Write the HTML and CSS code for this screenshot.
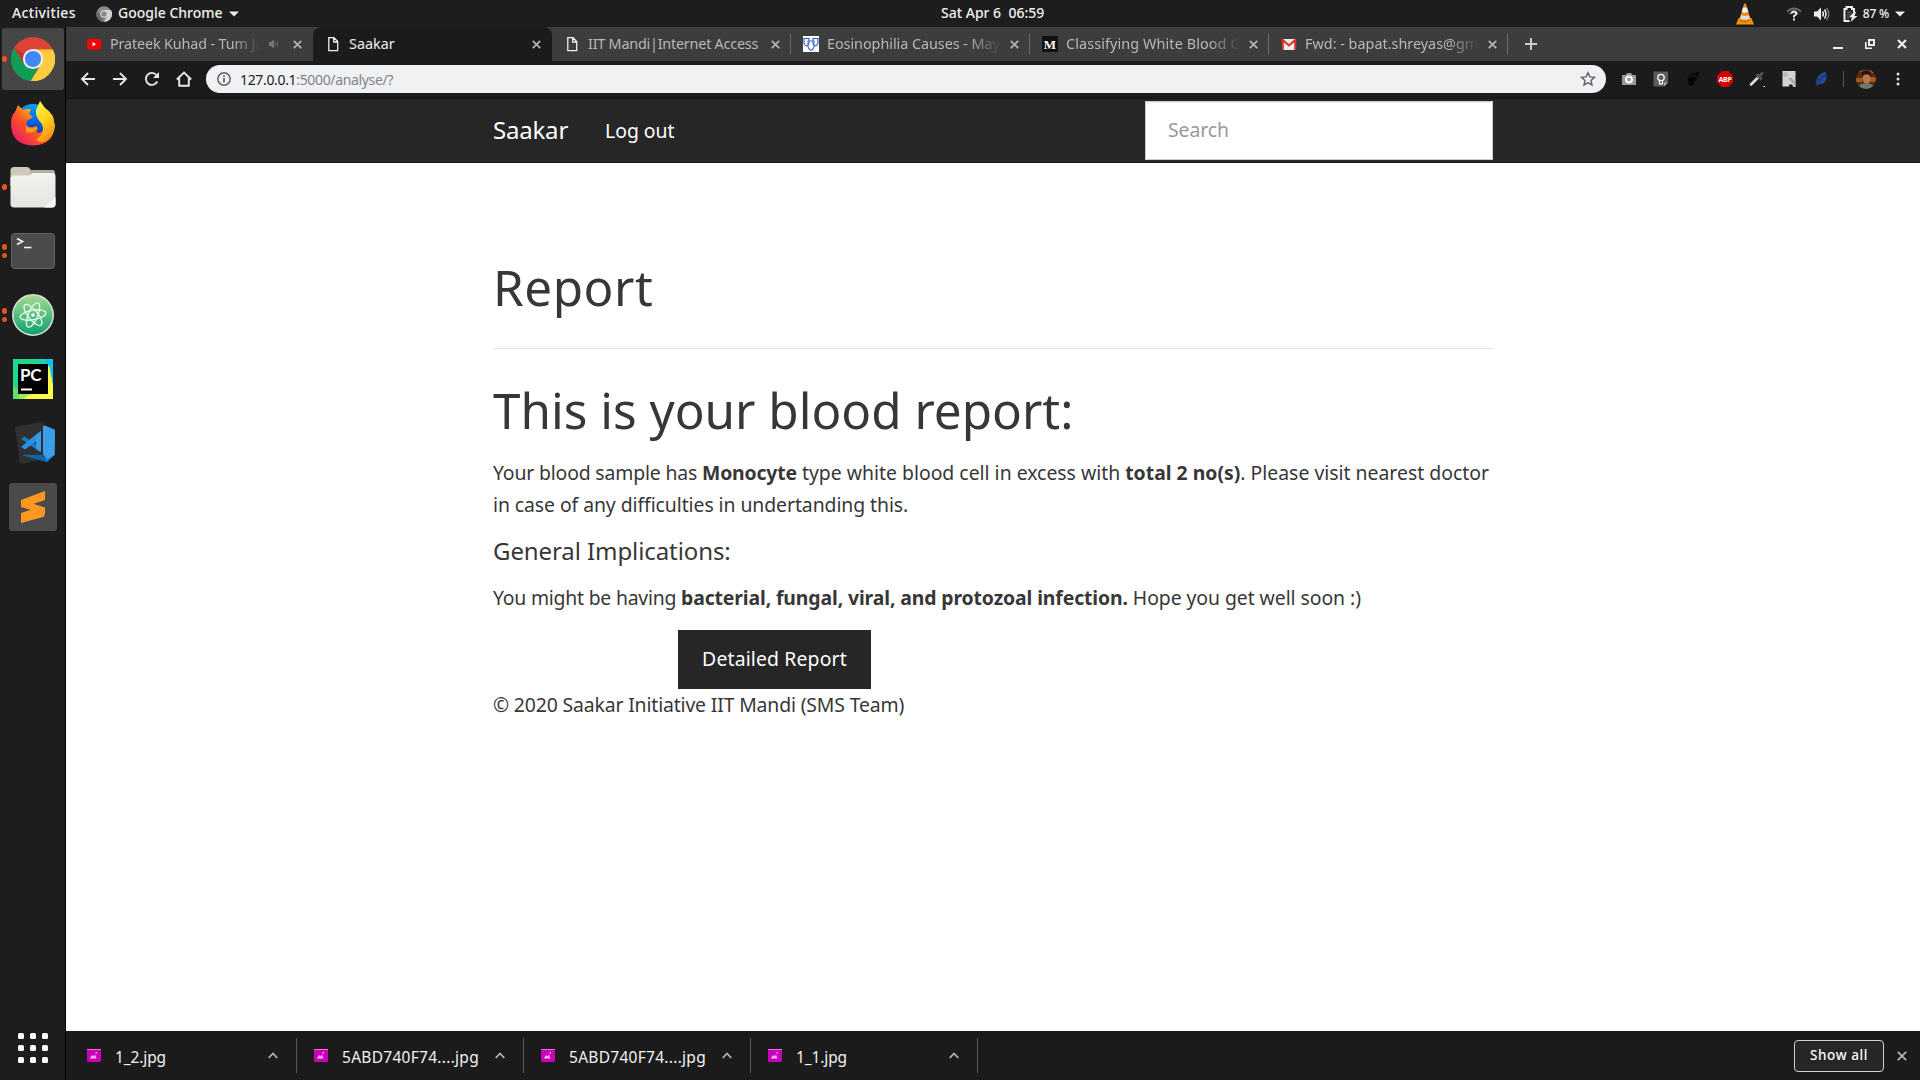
FILE: index.html
```html
<!DOCTYPE html>
<html lang="en">
<head>
<meta charset="utf-8">
<title>Saakar</title>
<link rel="stylesheet" href="styles.css">
</head>
<body>
<header class="topbar">
  <span class="activities">Activities</span>
  <svg class="app-icon" width="16" height="16" viewBox="0 0 48 48"><circle cx="24" cy="24" r="23" fill="#8b8b8b"/><path d="M24 12H45A23 23 0 0 1 24 47L34 30Z" fill="#d2d2d2"/><path d="M4 13L14 30 24 36 20 47A23 23 0 0 1 4 13Z" fill="#6c6c6c"/><circle cx="24" cy="24" r="11" fill="#ddd"/><circle cx="24" cy="24" r="8" fill="#8a8a8a"/></svg>
  <span class="app-name">Google Chrome</span>
  <svg class="caret" width="10" height="6" viewBox="0 0 10 6"><path d="M0 .5H10L5 5.500Z" fill="#eee"/></svg>
  <span class="clock">Sat Apr 6&nbsp; 06:59</span>
  <div class="tray">
    <svg class="vlc" width="18" height="22" viewBox="0 0 18 22"><path d="M2.500 15H15.500L18 21.500H0Z" fill="#f39200"/><path d="M3.500 17.500Q9 21 14.500 17.500L13 13H5Z" fill="#c86800"/><path d="M8 1Q9 -.3 10 1L14.500 16.500Q9 19.500 3.500 16.500Z" fill="#f08a1d"/><path d="M7 4.500H11L12.300 9Q9 10.500 5.700 9Z" fill="#eee"/><path d="M5 12Q9 14 13 12L14 15.500Q9 18 4 15.500Z" fill="#ddd"/></svg>
    <svg class="wifi" width="16" height="14" viewBox="0 0 16 14"><path d="M1 4.500Q8 -1.500 15 4.500M3.500 7.200Q8 3 12.500 7.200" fill="none" stroke="#6b6b6b" stroke-width="1.700"/><path d="M5.700 6.500Q5.800 4.500 8 4.500T10.300 6.400Q10.300 7.800 8 9V10.500" fill="none" stroke="#eee" stroke-width="1.900"/><rect x="7" y="11.500" width="2" height="2" fill="#eee"/></svg>
    <svg class="volume" width="16" height="14" viewBox="0 0 16 14"><path d="M0 4.500H3L7 .5V13.500L3 9.500H0Z" fill="#eee"/><path d="M8.500 4.500Q10.300 7 8.500 9.500M10.500 2.500Q13.500 7 10.500 11.500" fill="none" stroke="#eee" stroke-width="1.500"/><path d="M12.500 .8Q17 7 12.500 13.200" fill="none" stroke="#777" stroke-width="1.400"/></svg>
    <svg class="battery" width="15" height="16" viewBox="0 0 15 16"><path d="M6.500 15H1.500V3H3.500V1H9V3H11V6.500" fill="none" stroke="#eee" stroke-width="2"/><path d="M4 5H9V7L6 10.500V13H4Z" fill="#eee" opacity=".2"/><path d="M11 6L6 11.200H9L7.500 16 14.500 10H11.500L13 6Z" fill="#eee"/></svg>
    <span class="percent">87 %</span>
    <svg class="caret" width="10" height="6" viewBox="0 0 10 6"><path d="M0 .5H10L5 5.500Z" fill="#eee"/></svg>
  </div>
</header>
<div class="desktop">
  <nav class="dock">
    <div class="dock-item current"><i class="dots"><b></b></i>
      <svg width="44" height="44" viewBox="0 0 48 48"><circle cx="24" cy="24" r="24" fill="#db4437"/><path d="M3.300 12A24 24 0 0 0 22 48L32 29 24 24 14 29.500Z" fill="#0f9d58"/><path d="M24 13.500H45.600A24 24 0 0 1 21.500 48L33 29.500Z" fill="#ffcd40"/><path d="M24 13.500H45.500L44 17 30 15.500Z" fill="#f2b332" opacity=".5"/><path d="M3.500 12L14 29 16 19Z" fill="#a52714" opacity=".45"/><circle cx="24" cy="24" r="11" fill="#f1f1f1"/><circle cx="24" cy="24" r="8.800" fill="#4285f4"/></svg></div>
    <div class="dock-item">
      <svg width="44" height="46" viewBox="0 0 44 46"><defs><linearGradient id="fx" x1="1" y1="0" x2="0" y2=".9"><stop offset="0" stop-color="#fff44f"/><stop offset=".35" stop-color="#ffb41f"/><stop offset=".6" stop-color="#ff5522"/><stop offset="1" stop-color="#e3127d"/></linearGradient><linearGradient id="fy" x1=".2" y1="0" x2=".6" y2="1"><stop offset="0" stop-color="#fff44f"/><stop offset=".5" stop-color="#ffd21c"/><stop offset="1" stop-color="#ff8a16"/></linearGradient><linearGradient id="fb" x1=".6" y1="0" x2=".4" y2="1"><stop offset="0" stop-color="#00a4ff"/><stop offset=".5" stop-color="#0060df"/><stop offset="1" stop-color="#2b1a7c"/></linearGradient></defs><circle cx="22" cy="22" r="18" fill="url(#fb)"/><path d="M7 5L12 10Q16 8 20 9L18 14 22 17 16 21 15 25Q19 29 25 26L27 28Q23 35 31 32 36 28 33 18L44 24Q43 45 22 45.500 1 45 0 25 0 15 4 12Z" fill="url(#fx)"/><path d="M29 1L34 8Q44 14 43.500 26 42 36 36 40 31 44 25 40 35 33 31 24 24 17 25 10Z" fill="url(#fy)"/><path d="M15 25Q18 30 25 27L26 29Q22 34 15 32Z" fill="#ff9a1f"/></svg></div>
    <div class="dock-item"><i class="dots"><b></b></i>
      <svg width="46" height="42" viewBox="0 0 46 42"><defs><linearGradient id="fo" x2="0" y2="1"><stop offset="0" stop-color="#f4f2ee"/><stop offset="1" stop-color="#e6e4df"/></linearGradient></defs><path d="M.5 5Q.5 1 4 1H17Q19 1 20 3L21 4H42Q45 4 45 8V20H.5Z" fill="#cfc9bb"/><path d="M20 4H42Q45 4 45 8V12H20Z" fill="#b5ae9e"/><path d="M.5 12Q1 9.500 4 9.500H18Q20 9.500 21 8L22 7H42Q45.500 7 45.500 10V38Q45.500 41.500 42 41.500H4Q.5 41.500 .5 38Z" fill="url(#fo)"/><path d="M34 41.500L45.500 31V38Q45.500 41.500 42 41.500Z" fill="#f8f7f5"/></svg></div>
    <div class="dock-item"><i class="dots"><b></b><b></b></i>
      <svg width="44" height="36" viewBox="0 0 44 36"><rect x=".5" y=".5" width="43" height="35" rx="3.500" fill="#4b4b4b" stroke="#656565"/><path d="M6 5.500L11.500 8.500 6 11.500" fill="none" stroke="#f3f3f3" stroke-width="1.700"/><path d="M13 14.500H20.500" stroke="#f3f3f3" stroke-width="1.600"/></svg></div>
    <div class="dock-item"><i class="dots"><b></b><b></b></i>
      <svg width="42" height="42" viewBox="0 0 42 42"><defs><linearGradient id="at" x2="0" y2="1"><stop offset="0" stop-color="#a5dd90"/><stop offset="1" stop-color="#0ba06e"/></linearGradient></defs><circle cx="21" cy="21" r="20.200" fill="url(#at)" stroke="#dedede" stroke-width="1.500"/><g fill="none" stroke="#eef8ee" stroke-width="1.300"><ellipse cx="21" cy="21" rx="13" ry="4.800" transform="rotate(-10 21 21)"/><ellipse cx="21" cy="21" rx="13" ry="4.800" transform="rotate(51 21 21)"/><ellipse cx="21" cy="21" rx="13" ry="4.800" transform="rotate(112 21 21)"/></g><circle cx="21" cy="21" r="1.800" fill="#fff"/></svg></div>
    <div class="dock-item">
      <svg width="40" height="40" viewBox="0 0 40 40"><rect width="40" height="40" fill="#21d789"/><path d="M30 0H40V26L33 8Z" fill="#07c3f2"/><path d="M22 0L32 0 36 14Z" fill="#22d0b0"/><path d="M36 6L40 26V40H10L22 30Z" fill="#fcf84a"/><path d="M0 27L12 36 9 40H0Z" fill="#5fe06d"/><path d="M6 34L22 32 10 40H6Z" fill="#9fe85a"/><rect x="5" y="5" width="30" height="30" fill="#000"/><rect x="8" y="29.500" width="11" height="2" fill="#fff"/><text class="pc-mark" x="7" y="21.500">PC</text></svg></div>
    <div class="dock-item">
      <svg class="vscode" width="42" height="44" viewBox="0 0 42 44"><path d="M1 6L29 1 37 37 6 43Z" fill="#303030"/><path d="M8 34L31 37V5L41 9 40.500 34 33 41Z" fill="#1b80cc"/><path d="M29 33V5L31 4.500 41 9 40.500 34 33 38Z" fill="#3a9fe8"/><path d="M8 34L29 33 33 41Z" fill="#0e66aa"/><path d="M1 6L29 1V34L8 33.500Z" fill="#303030"/><path d="M7 18L10.500 15.500 26 26V31Z" fill="#1d79bd"/><path d="M20 15L27 10V17L11 28.500 7 26Z" fill="#2c8fdc"/><path d="M22 14L27 10V31L22 28Z" fill="#379be5"/></svg></div>
    <div class="dock-item">
      <svg width="48" height="48" viewBox="0 0 48 48"><rect width="48" height="48" rx="3" fill="#4a4a4a"/><path d="M12 17L36 8V17L24 21 36 25Q36 34 34 34L12 40V30L24 26 12 23Z" fill="#ff9821"/><path d="M12 23L24 21.500 36 25 30 29Z" fill="#d97a10"/><path d="M12 17L36 24.500V31L12 24Z" fill="#ff9821"/></svg></div>
    <svg class="apps" width="30" height="30" viewBox="0 0 30 30" fill="#fafafa"><rect width="6" height="6" rx="1.500"/><rect x="12" width="6" height="6" rx="1.500"/><rect x="24" width="6" height="6" rx="1.500"/><rect y="12" width="6" height="6" rx="1.500"/><rect x="12" y="12" width="6" height="6" rx="1.500"/><rect x="24" y="12" width="6" height="6" rx="1.500"/><rect y="24" width="6" height="6" rx="1.500"/><rect x="12" y="24" width="6" height="6" rx="1.500"/><rect x="24" y="24" width="6" height="6" rx="1.500"/></svg>
  </nav>
  <div class="browser">
    <div class="tabs">
      <div class="tab first"><svg class="fav" width="16" height="16" viewBox="0 0 16 16"><rect x="1" y="3" width="14" height="10.500" rx="2.500" fill="#f00"/><path d="M6.500 6L10 8.200 6.500 10.400Z" fill="#fff"/></svg><span class="tab-title fade"><span class="t-youtube">Prateek Kuhad - Tum Ja</span></span><svg class="audio" width="11" height="10" viewBox="0 0 11 10"><path d="M0 3H2L5 .5V9.500L2 7H0Z" fill="#777"/><path d="M6.500 3V7M8.500 2V8" stroke="#666"/></svg><svg class="x" width="9" height="9" viewBox="0 0 9 9"><path d="M.8 .8L8.200 8.200M8.200 .8L.8 8.200"/></svg></div>
      <div class="tab active"><svg class="fav" width="16" height="16" viewBox="0 0 16 16"><path d="M3.800 1.700H9L12.700 5.500V14.700H3.800ZM8.700 2V6H12.700" fill="none" stroke="#eee" stroke-width="1.300"/></svg><span class="tab-title"><span>Saakar</span></span><svg class="x" width="9" height="9" viewBox="0 0 9 9"><path d="M.8 .8L8.200 8.200M8.200 .8L.8 8.200"/></svg></div>
      <div class="tab"><svg class="fav" width="16" height="16" viewBox="0 0 16 16"><path d="M3.800 1.700H9L12.700 5.500V14.700H3.800ZM8.700 2V6H12.700" fill="none" stroke="#eee" stroke-width="1.300"/></svg><span class="tab-title"><span class="t-iit">IIT Mandi|Internet Access</span></span><svg class="x" width="9" height="9" viewBox="0 0 9 9"><path d="M.8 .8L8.200 8.200M8.200 .8L.8 8.200"/></svg></div>
      <div class="tab ruled"><svg class="fav" width="16" height="16" viewBox="0 0 16 16"><rect width="16" height="16" fill="#fff"/><g fill="none" stroke="#2a55c0" stroke-width="1.100"><path d="M1 2.500H6V7Q6 9 3.500 10 1 9 1 7ZM10 2.500H15V7Q15 9 12.500 10 10 9 10 7Z"/><path d="M5 5H11V10Q11 13 8 14.500 5 13 5 10Z" stroke="#4a70cc"/></g></svg><span class="tab-title fade"><span class="t-mayo">Eosinophilia Causes - May</span></span><svg class="x" width="9" height="9" viewBox="0 0 9 9"><path d="M.8 .8L8.200 8.200M8.200 .8L.8 8.200"/></svg></div>
      <div class="tab ruled"><svg class="fav" width="16" height="16" viewBox="0 0 16 16"><rect width="16" height="16" fill="#111"/><text class="m-mark" x="8" y="12.500">M</text></svg><span class="tab-title fade"><span class="t-medium">Classifying White Blood C</span></span><svg class="x" width="9" height="9" viewBox="0 0 9 9"><path d="M.8 .8L8.200 8.200M8.200 .8L.8 8.200"/></svg></div>
      <div class="tab ruled"><svg class="fav" width="16" height="16" viewBox="0 0 16 16"><rect x="1" y="3" width="14" height="11" rx="1" fill="#eee"/><path d="M1.800 14V4L8 9.500 14.200 4V14" fill="none" stroke="#d93025" stroke-width="2"/></svg><span class="tab-title fade"><span>Fwd: - bapat.shreyas@gm</span></span><svg class="x" width="9" height="9" viewBox="0 0 9 9"><path d="M.8 .8L8.200 8.200M8.200 .8L.8 8.200"/></svg></div>
      <div class="tab-end"></div>
      <div class="newtab"><svg width="12" height="12" viewBox="0 0 12 12"><path d="M6 0V12M0 6H12" stroke="#ccc" stroke-width="2"/></svg></div>
      <div class="winctl"><svg width="10" height="10" viewBox="0 0 10 10"><path d="M0 9H10" stroke="#eee" stroke-width="2"/></svg><svg width="10" height="10" viewBox="0 0 10 10"><path d="M4 1H9V6H4Z" fill="none" stroke="#eee" stroke-width="2"/><path d="M.8 3V9.200H7" fill="none" stroke="#eee" stroke-width="1.600"/></svg><svg width="10" height="10" viewBox="0 0 10 10"><path d="M1 1L9 9M9 1L1 9" stroke="#eee" stroke-width="2.200"/></svg></div>
    </div>
    <div class="toolbar">
      <div class="nav-icons">
        <svg width="16" height="16" viewBox="0 0 16 16"><path d="M15 8H2.500M8 2L2 8 8 14"/></svg>
        <svg width="16" height="16" viewBox="0 0 16 16"><path d="M1 8H13.500M8 2L14 8 8 14"/></svg>
        <svg width="16" height="16" viewBox="0 0 16 16"><path d="M13.300 10.500A6 6 0 1 1 12.500 4L14 5.500"/><path d="M15 1V7H9Z" class="solid"/></svg>
        <svg width="16" height="16" viewBox="0 0 16 16"><path d="M.8 8.500L8 1.500 15.200 8.500M3.200 7V14.800H12.800V7"/></svg>
      </div>
      <div class="omnibox">
        <svg width="14" height="14" viewBox="0 0 14 14"><circle cx="7" cy="7" r="6.200" fill="none" stroke="#5f6368" stroke-width="1.500"/><path d="M7 6V10.500M7 3.300V4.900" stroke="#5f6368" stroke-width="1.700"/></svg>
        <span class="url"><span class="host">127.0.0.1</span>:5000/analyse/?</span>
        <svg class="star" width="16" height="16" viewBox="0 0 16 16"><path d="M8 1.700L9.900 5.900 14.500 6.400 11 9.400 12 14 8 11.600 4 14 5 9.400 1.500 6.400 6.100 5.900Z" fill="none" stroke="#5f6368" stroke-width="1.400"/></svg>
      </div>
      <div class="extensions">
        <svg width="16" height="16" viewBox="0 0 16 16"><path d="M1 4H4.500L6 2H10L11.500 4H15V14H1Z" fill="#999"/><circle cx="8" cy="8.500" r="3" fill="none" stroke="#fff" stroke-width="1.800"/></svg>
        <svg width="16" height="16" viewBox="0 0 16 16"><path d="M.5 .5H15V11L11 15.500H.5Z" fill="#5c5c5c"/><path d="M11 15.500V11.500H15Z" fill="#aaa"/><circle cx="8" cy="6.500" r="3.200" fill="none" stroke="#fff" stroke-width="1.300"/><path d="M6.500 9.500V12.800H9.500V9.500" fill="none" stroke="#fff" stroke-width="1.200"/></svg>
        <svg width="16" height="16" viewBox="0 0 16 16" fill="#050505"><path d="M3 8Q7 5 12 7 13 10 9 10 10 12 8 14.500 5 16 3 12Z"/><ellipse cx="12" cy="3" rx="1.800" ry="2.500"/><ellipse cx="8.300" cy="3.500" rx="1.200" ry="1.700"/><ellipse cx="5.500" cy="4.800" rx="1" ry="1.400"/><ellipse cx="3.200" cy="6.500" rx=".8" ry="1.200"/></svg>
        <svg width="16" height="16" viewBox="0 0 16 16"><path d="M4.700 0H11.300L16 4.700V11.300L11.300 16H4.700L0 11.300V4.700Z" fill="#d40000"/><text class="abp" x="8" y="10.700">ABP</text></svg>
        <svg width="16" height="16" viewBox="0 0 16 16"><path d="M2 13.500L9 6.500" stroke="#ddd" stroke-width="2.600" stroke-linecap="round"/><path d="M8.500 4L12 7.500M9.500 6L13 2.500" stroke="#555" stroke-width="2.800" stroke-linecap="round"/><rect x="14.500" y="15" width="1.500" height="1" fill="#fff"/></svg>
        <svg width="16" height="16" viewBox="0 0 16 16"><path d="M1.500 0H14.500V16H12.500L11 13.500H8V15.500H1.500Z" fill="#d4d4d4"/><circle cx="4.500" cy="3.500" r="2.500" fill="#bbb"/><path d="M7 7L10.500 7 14.500 11V15.500Z" fill="#aaa"/></svg>
        <svg width="16" height="16" viewBox="0 0 16 16"><path d="M13 .5Q5 2.500 3.500 9L2.500 15 7 13Q12 13 13.500 8Z" fill="#26479b"/><path d="M3 14L12 4M5 8L8 9M8 5L10 7" stroke="#15265c" stroke-width=".8"/></svg>
      </div>
      <i class="bar-rule"></i>
      <svg class="avatar" width="20" height="20" viewBox="0 0 20 20"><defs><clipPath id="av"><circle cx="10" cy="10" r="10"/></clipPath></defs><g clip-path="url(#av)"><rect width="20" height="20" fill="#5a2a12"/><path d="M0 9H6V13H0ZM14 8H20V13H14Z" fill="#a35a1c"/><path d="M3 3L6 1M14 1L17 4" stroke="#b0621f" stroke-width="1.500"/><ellipse cx="10.500" cy="9.500" rx="4" ry="5.300" fill="#b57454"/><path d="M6 8Q5 2 10.500 2T15 8L13 5.500H8Z" fill="#1d120e"/><path d="M2 20Q3 14.500 8 14.500H13Q18 15 18 20Z" fill="#6d7a70"/></g></svg>
      <svg class="menu" width="4" height="14" viewBox="0 0 4 14" fill="#ddd"><circle cx="2" cy="2" r="1.500"/><circle cx="2" cy="7" r="1.500"/><circle cx="2" cy="12" r="1.500"/></svg>
    </div>
    <div class="page">
      <nav class="navbar">
        <div class="container nav-row">
          <a class="brand">Saakar</a>
          <a class="logout">Log out</a>
          <div class="search">Search</div>
        </div>
      </nav>
      <main class="container">
        <h1 class="title">Report</h1>
        <hr>
        <h1>This is your blood report:</h1>
        <p><span class="snug">Your blood sample has </span><b class="snug">Monocyte</b><span> type white blood cell in excess with </span><b>total 2 no(s)</b><span>. Please visit nearest doctor</span><br><span class="line-two">in case of any difficulties in undertanding this.</span></p>
        <h4>General Implications:</h4>
        <p class="implications"><span class="lead">You might be having </span><b>bacterial, fungal, viral, and protozoal infection.</b><span class="wish"> Hope you get well soon :)</span></p>
        <a class="button">Detailed Report</a>
        <footer>© 2020 Saakar Initiative IIT Mandi (SMS Team)</footer>
      </main>
    </div>
    <div class="downloads">
      <div class="dl"><svg width="14" height="13" viewBox="0 0 14 13"><rect width="14" height="13" rx="1.500" fill="#c800b9"/><path d="M0 .5H14" stroke="#ee6be0"/><path d="M3 9L5 6 6.500 7.500 8 5.500 9.500 9.500H3ZM8.500 3H10V4.500H8.500Z" fill="#f5b5ee"/></svg><span class="short">1_2.jpg</span><svg class="up" width="10" height="7" viewBox="0 0 10 7"><path d="M.7 6L5 1.500 9.300 6"/></svg></div>
      <div class="dl"><svg width="14" height="13" viewBox="0 0 14 13"><rect width="14" height="13" rx="1.500" fill="#c800b9"/><path d="M0 .5H14" stroke="#ee6be0"/><path d="M3 9L5 6 6.500 7.500 8 5.500 9.500 9.500H3ZM8.500 3H10V4.500H8.500Z" fill="#f5b5ee"/></svg><span class="long">5ABD740F74....jpg</span><svg class="up" width="10" height="7" viewBox="0 0 10 7"><path d="M.7 6L5 1.500 9.300 6"/></svg></div>
      <div class="dl"><svg width="14" height="13" viewBox="0 0 14 13"><rect width="14" height="13" rx="1.500" fill="#c800b9"/><path d="M0 .5H14" stroke="#ee6be0"/><path d="M3 9L5 6 6.500 7.500 8 5.500 9.500 9.500H3ZM8.500 3H10V4.500H8.500Z" fill="#f5b5ee"/></svg><span class="long">5ABD740F74....jpg</span><svg class="up" width="10" height="7" viewBox="0 0 10 7"><path d="M.7 6L5 1.500 9.300 6"/></svg></div>
      <div class="dl"><svg width="14" height="13" viewBox="0 0 14 13"><rect width="14" height="13" rx="1.500" fill="#c800b9"/><path d="M0 .5H14" stroke="#ee6be0"/><path d="M3 9L5 6 6.500 7.500 8 5.500 9.500 9.500H3ZM8.500 3H10V4.500H8.500Z" fill="#f5b5ee"/></svg><span class="short">1_1.jpg</span><svg class="up" width="10" height="7" viewBox="0 0 10 7"><path d="M.7 6L5 1.500 9.300 6"/></svg></div>
      <button class="show-all">Show all</button>
      <svg class="x dl-close" width="10" height="10" viewBox="0 0 10 10"><path d="M.8 .8L9.200 9.200M9.200 .8L.8 9.200"/></svg>
    </div>
  </div>
</div>
</body>
</html>
```
FILE: styles.css
```css
* { box-sizing: border-box; }
body {
  margin: 0;
  width: 1920px;
  height: 1080px;
  overflow: hidden;
  display: flex;
  flex-direction: column;
  background: #1d1d1d;
  font-family: "Noto Sans", "Open Sans", sans-serif;
  font-size: 14px;
  color: #f2f2f2;
}
svg { display: block; flex: none; }
span, b, a { white-space: pre; }

/* desktop top bar */
.topbar {
  height: 27px;
  flex: none;
  display: grid;
  grid-template-columns: 84px 22px 111px 712px auto 1fr;
  align-items: center;
  padding-left: 12px;
  font-weight: 500;
}
.activities, .app-name, .clock { line-height: 19px; padding-bottom: 2px; }
.activities { letter-spacing: .35px; }
.tray {
  display: flex;
  align-items: center;
  justify-content: flex-end;
  padding-right: 15px;
}
.wifi { margin-left: 32px; }
.volume { margin-left: 12px; }
.battery { margin-left: 13px; }
.percent { margin: 0 6px 0 5px; font-size: 12px; letter-spacing: -.2px; }

.desktop { flex: 1; display: flex; min-height: 0; }

/* launcher */
.dock {
  width: 66px;
  border-right: 1px solid #000;
  display: flex;
  flex-direction: column;
  align-items: center;
  padding-bottom: 17px;
}
.dock-item {
  width: 62px;
  height: 62px;
  margin: 1px 0;
  display: flex;
  align-items: center;
  justify-content: center;
  position: relative;
  flex: none;
}
.dock-item.current { background: #464646; border-radius: 3px; }
.vscode { margin-left: 4px; }
.dots {
  position: absolute;
  left: 0;
  top: 0;
  height: 100%;
  display: flex;
  flex-direction: column;
  justify-content: center;
  gap: 3px;
}
.dots b { width: 5.5px; height: 5.5px; border-radius: 50%; background: #e95420; }
.pc-mark { font: 700 17px "Lato", sans-serif; fill: #fff; letter-spacing: -.2px; }
.apps { margin-top: auto; }

/* browser window */
.browser { flex: 1; display: flex; flex-direction: column; min-width: 0; }
.tabs {
  height: 34px;
  flex: none;
  display: flex;
  background: #3d3d3d;
  font-size: 14.4px;
  color: #b8b8b8;
}
.tab {
  width: 239px;
  display: flex;
  align-items: center;
  padding: 0 11px 0 12px;
  position: relative;
}
.tab.first { width: 247px; padding-left: 20px; }
.tab.active { background: #1b1b1b; border-radius: 8px 8px 0 0; color: #eee; padding-left: 12px; }
.tab.ruled::before, .tab-end::before {
  content: "";
  position: absolute;
  left: -1px;
  top: 7px;
  height: 20px;
  width: 1px;
  background: #6a6a6a;
}
.tab-end { position: relative; width: 0; }
.tab-title { flex: 1; margin-left: 8px; overflow: hidden; height: 24px; line-height: 24px; }
.tab-title.fade {
  margin-right: 9px;
  -webkit-mask-image: linear-gradient(to right, #000 82%, transparent);
  mask-image: linear-gradient(to right, #000 82%, transparent);
}
.t-youtube { letter-spacing: -.15px; }
.t-iit { letter-spacing: -.23px; }
.t-mayo { letter-spacing: -.05px; }
.t-medium { letter-spacing: .1px; }
.audio { margin-right: 13px; }
.x path { fill: none; stroke: #b5b5b5; stroke-width: 1.7; }
.m-mark { font: 700 13px "Liberation Serif", serif; fill: #fff; text-anchor: middle; }
.newtab { width: 46px; display: flex; align-items: center; justify-content: center; }
.winctl { margin-left: auto; display: flex; align-items: center; gap: 22px; padding-right: 13px; }

.toolbar {
  height: 38px;
  flex: none;
  display: flex;
  align-items: center;
  background: #1b1b1b;
  border-bottom: 1px solid #141414;
  padding: 0 20px 1px 14px;
}
.nav-icons { display: flex; gap: 16px; }
.nav-icons path { fill: none; stroke: #e6e6e6; stroke-width: 1.9; }
.nav-icons path.solid { fill: #e6e6e6; stroke: none; }
.omnibox {
  margin-left: 14px;
  width: 1401px;
  height: 28px;
  border-radius: 14px;
  background: #f0f1f3;
  display: flex;
  align-items: center;
  padding: 0 10px 0 11px;
}
.url { margin-left: 9px; color: #80838a; letter-spacing: -.34px; }
.host { color: #202124; }
.star { margin-left: auto; }
.extensions { display: flex; gap: 16px; margin-left: 15px; }
.abp { font: 700 7px "Noto Sans", sans-serif; fill: #fff; text-anchor: middle; letter-spacing: -.3px; }
.bar-rule { width: 1px; height: 16px; background: #555; margin-left: 14px; }
.avatar { margin-left: 12px; }
.menu { margin-left: 20px; }

/* web page */
.page { flex: 1; background: #fff; color: #373737; font-size: 19.4px; }
.container { width: 1000px; margin: 0 auto; }
.navbar { height: 64px; background: #262626; border-bottom: 1px solid #171717; color: #fff; }
.nav-row { display: flex; align-items: center; height: 63px; }
.brand { font-size: 24px; letter-spacing: -.2px; padding-bottom: 2px; }
.logout { margin-left: 37px; letter-spacing: -.05px; }
.search {
  margin-left: auto;
  width: 348px;
  height: 59px;
  background: #fff;
  border: 1px solid #ccc;
  box-shadow: inset 0 1px 1px rgba(0, 0, 0, .075);
  color: #999;
  padding-left: 22px;
  line-height: 56px;
  letter-spacing: -.1px;
}
main { padding-top: 94px; line-height: 32px; }
h1 { margin: 0; font-size: 49.4px; line-height: 60px; font-weight: 400; }
.title { letter-spacing: .55px; }
hr { margin: 31px 0; border: 0; height: 1px; background: #e2e2e2; }
p { margin: 17px 0 15px; }
.snug { letter-spacing: -.16px; }
.line-two { letter-spacing: -.07px; }
h4 { margin: 0; font-size: 24px; line-height: 30px; font-weight: 400; letter-spacing: -.09px; }
.implications { margin: 16px 0; }
.implications b { letter-spacing: -.12px; }
.lead { letter-spacing: -.22px; }
.wish { letter-spacing: -.06px; }
.button {
  display: flex;
  align-items: center;
  justify-content: center;
  width: 193px;
  height: 59px;
  margin-left: 185px;
  padding-bottom: 2px;
  background: #262626;
  color: #fff;
  letter-spacing: .15px;
}
footer { line-height: 31px; letter-spacing: -.15px; }

/* downloads shelf */
.downloads {
  height: 49px;
  flex: none;
  display: flex;
  align-items: center;
  background: #1b1b1b;
  padding-right: 13px;
  font-size: 15.5px;
}
.dl {
  width: 227px;
  height: 35px;
  display: flex;
  align-items: center;
  border-right: 1px solid #5a5a5a;
  padding: 0 18px 0 17px;
}
.dl:first-child { width: 231px; padding-left: 21px; }
.dl span { margin-left: 14px; padding-top: 2px; }
.short { letter-spacing: -.12px; }
.long { letter-spacing: .28px; }
.up { margin-left: auto; }
.up path { fill: none; stroke: #b5b5b5; stroke-width: 1.8; }
.show-all {
  margin-left: auto;
  width: 90px;
  height: 32px;
  border: 1px solid #d0d0d0;
  border-radius: 4px;
  background: #262626;
  color: #fff;
  font: 500 13.5px "Noto Sans", sans-serif;
  letter-spacing: .58px;
  padding: 0 0 2px;
}
.dl-close { margin-left: 13px; }
```
